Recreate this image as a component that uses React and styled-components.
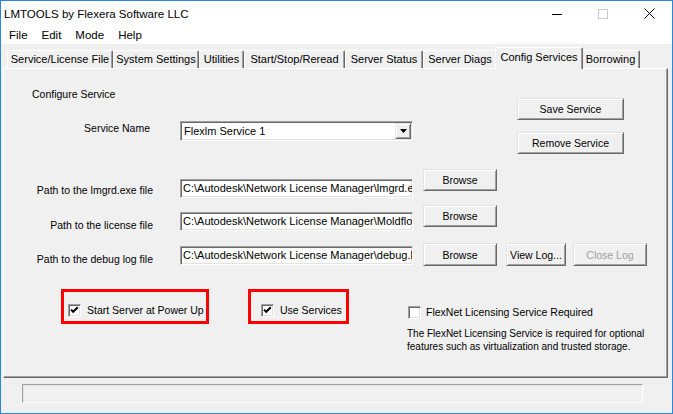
import React from 'react';
import styled, { createGlobalStyle } from 'styled-components';

const GlobalStyle = createGlobalStyle`
  html, body {
    margin: 0;
    padding: 0;
    background: #fff;
  }
  body {
    font-family: "Liberation Sans", Arial, sans-serif;
    color: #000;
  }
`;

const Window = styled.div`
  width: 673px;
  height: 414px;
  box-sizing: border-box;
  border: 1px solid #2b88d8;
  display: flex;
  flex-direction: column;
  background: #f0f0f0;
  overflow: hidden;
`;

const TitleBar = styled.div`
  height: 25px;
  display: flex;
  align-items: center;
  background: #fff;
  padding-left: 3px;
  font-size: 11.5px;
`;

const TitleText = styled.div`
  flex: 1;
`;

const Controls = styled.div`
  display: flex;
  height: 100%;
`;

const ControlButton = styled.div`
  width: 46px;
  display: flex;
  align-items: center;
  justify-content: center;
`;

const MenuBar = styled.div`
  height: 18px;
  display: flex;
  align-items: center;
  background: #fff;
  padding-left: 1px;
  font-size: 11.5px;
`;

const MenuItem = styled.div`
  padding: 0 7px;
`;

const Body = styled.div`
  flex: 1;
  display: flex;
  flex-direction: column;
  padding: 3px 4px 0 2px;
`;

const TabStrip = styled.div`
  display: flex;
  align-items: flex-end;
  height: 21px;
  padding-left: 4px;
  position: relative;
  z-index: 1;
`;

const Tab = styled.div`
  width: ${p => p.$w}px;
  height: ${p => (p.$active ? 22 : 18)}px;
  margin: ${p => (p.$active ? '0 -2px -1px' : '0')};
  box-sizing: border-box;
  border-top: 1px solid #fff;
  border-left: 1px solid #fff;
  border-right: 1px solid #696969;
  border-radius: 2px 2px 0 0;
  box-shadow: inset -1px 0 #a0a0a0;
  background: #f0f0f0;
  font-size: 11px;
  display: flex;
  justify-content: center;
  padding-top: ${p => (p.$active ? 3 : 2)}px;
  white-space: nowrap;
  position: relative;
  z-index: ${p => (p.$active ? 2 : 1)};
`;

const Panel = styled.div`
  height: 310px;
  box-sizing: border-box;
  border: 1px solid;
  border-color: #fff #696969 #696969 #fff;
  box-shadow: inset -1px -1px #a0a0a0;
  font-size: 10.5px;
  display: flex;
  flex-direction: column;
`;

const TopSection = styled.div`
  display: flex;
  margin-top: 19px;
`;

const LeftCol = styled.div`
  display: flex;
  flex-direction: column;
`;

const Heading = styled.div`
  padding-left: 28px;
  line-height: 13px;
`;

const ServiceRow = styled.div`
  display: flex;
  align-items: flex-start;
  margin-top: 20px;
`;

const FieldLabel = styled.div`
  width: ${p => p.$w}px;
  text-align: right;
  line-height: 13px;
  margin-top: ${p => p.$offset || 0}px;
  white-space: nowrap;
`;

const ButtonCol = styled.div`
  margin-left: auto;
  margin-right: 43px;
  margin-top: 10px;
  display: flex;
  flex-direction: column;
  gap: 12px;
`;

const Button = styled.div`
  width: ${p => p.$w}px;
  height: ${p => p.$h || 22}px;
  margin-left: ${p => p.$ml || 0}px;
  box-sizing: border-box;
  border: 1px solid;
  border-color: #e3e3e3 #696969 #696969 #e3e3e3;
  box-shadow: inset 1px 1px #fff, inset -1px -1px #a0a0a0;
  background: #f0f0f0;
  display: flex;
  align-items: center;
  justify-content: center;
  font-size: 10.5px;
  color: ${p => (p.$disabled ? '#a0a0a0' : '#000')};
  white-space: nowrap;
`;

const Sunken = styled.div`
  box-sizing: border-box;
  border: 1px solid;
  border-color: #a0a0a0 #fff #fff #a0a0a0;
  box-shadow: inset 1px 1px #696969, inset -1px -1px #e3e3e3;
  background: #fff;
`;

const Combo = styled(Sunken)`
  width: 233px;
  height: 20px;
  margin-left: 30px;
  display: flex;
  padding: 1px;
`;

const ComboText = styled.div`
  flex: 1;
  font-size: 11px;
  padding-left: 2px;
  line-height: 17px;
`;

const DropButton = styled.div`
  width: 16px;
  height: 16px;
  box-sizing: border-box;
  border: 1px solid;
  border-color: #e3e3e3 #696969 #696969 #e3e3e3;
  box-shadow: inset 1px 1px #fff, inset -1px -1px #a0a0a0;
  background: #f0f0f0;
  display: flex;
  align-items: center;
  justify-content: center;
`;

const PathRows = styled.div`
  margin-top: 15px;
  display: flex;
  flex-direction: column;
`;

const PathRow = styled.div`
  display: flex;
  align-items: flex-start;
  height: ${p => p.$h}px;
`;

const TextField = styled(Sunken)`
  width: 233px;
  height: 19px;
  margin-left: 27px;
  margin-top: ${p => p.$offset || 0}px;
  margin-right: 10px;
  overflow: hidden;
  white-space: nowrap;
  font-size: 11px;
  line-height: 17px;
  padding-left: 2px;
`;

const BottomSection = styled.div`
  display: flex;
  align-items: flex-start;
  margin-top: 23px;
`;

const Highlight = styled.div`
  width: ${p => p.$w}px;
  height: 35px;
  margin-left: ${p => p.$ml}px;
  box-sizing: border-box;
  border: 3px solid #f00;
  padding: 12px 0 0 ${p => p.$pl}px;
`;

const CheckRow = styled.div`
  display: flex;
  align-items: center;
  gap: ${p => p.$gap || 6}px;
  line-height: 13px;
  white-space: nowrap;
`;

const Box = styled(Sunken)`
  width: 13px;
  height: 13px;
  flex: none;
  display: flex;
  align-items: center;
  justify-content: center;
`;

const FlexNetCol = styled.div`
  margin-left: 59px;
  margin-top: 17px;
  display: flex;
  flex-direction: column;
`;

const Description = styled.div`
  margin-top: 8px;
  margin-left: -1px;
  font-size: 10px;
  line-height: 13px;
  white-space: nowrap;
`;

const StatusField = styled.div`
  margin: 6px 0 0 19px;
  width: 621px;
  height: 19px;
  box-sizing: border-box;
  border: 1px solid;
  border-color: #a0a0a0 #fff #fff #a0a0a0;
  box-shadow: inset 1px 1px #e3e3e3;
`;

const CheckBox = ({ checked }) => (
  <Box>
    {checked && (
      <svg width="9" height="9" viewBox="0 0 9 9">
        <path d="M1 3.6 L3.2 5.8 L7.8 1.2" fill="none" stroke="#000" strokeWidth="2" />
      </svg>
    )}
  </Box>
);

const tabs = [
  { label: 'Service/License File', w: 106 },
  { label: 'System Settings', w: 86 },
  { label: 'Utilities', w: 45 },
  { label: 'Start/Stop/Reread', w: 101 },
  { label: 'Server Status', w: 78 },
  { label: 'Server Diags', w: 74 },
  { label: 'Config Services', w: 88, active: true },
  { label: 'Borrowing', w: 59 }
];

export default function App() {
  return (
    <>
      <GlobalStyle />
      <Window>
        <TitleBar>
          <TitleText>LMTOOLS by Flexera Software LLC</TitleText>
          <Controls>
            <ControlButton>
              <svg width="10" height="10" viewBox="0 0 10 10">
                <rect x="0" y="5" width="10" height="1" fill="#000" />
              </svg>
            </ControlButton>
            <ControlButton>
              <svg width="10" height="10" viewBox="0 0 10 10">
                <rect x="0.5" y="0.5" width="9" height="9" fill="none" stroke="#cccccc" />
              </svg>
            </ControlButton>
            <ControlButton>
              <svg width="11" height="11" viewBox="0 0 11 11">
                <path d="M0.5 0.5 L10.5 10.5 M10.5 0.5 L0.5 10.5" stroke="#000" strokeWidth="1" />
              </svg>
            </ControlButton>
          </Controls>
        </TitleBar>
        <MenuBar>
          <MenuItem>File</MenuItem>
          <MenuItem>Edit</MenuItem>
          <MenuItem>Mode</MenuItem>
          <MenuItem>Help</MenuItem>
        </MenuBar>
        <Body>
          <TabStrip>
            {tabs.map(t => (
              <Tab key={t.label} $w={t.w} $active={t.active}>
                {t.label}
              </Tab>
            ))}
          </TabStrip>
          <Panel>
            <TopSection>
              <LeftCol>
                <Heading>Configure Service</Heading>
                <ServiceRow>
                  <FieldLabel $w={146} $offset={1}>Service Name</FieldLabel>
                  <Combo>
                    <ComboText>Flexlm Service 1</ComboText>
                    <DropButton>
                      <svg width="7" height="4" viewBox="0 0 7 4">
                        <polygon points="0,0 7,0 3.5,4" fill="#000" />
                      </svg>
                    </DropButton>
                  </Combo>
                </ServiceRow>
              </LeftCol>
              <ButtonCol>
                <Button $w={107}>Save Service</Button>
                <Button $w={107}>Remove Service</Button>
              </ButtonCol>
            </TopSection>

            <PathRows>
              <PathRow $h={36}>
                <FieldLabel $w={149} $offset={15}>Path to the lmgrd.exe file</FieldLabel>
                <TextField $offset={10}>C:\Autodesk\Network License Manager\lmgrd.exe</TextField>
                <Button $w={74}>Browse</Button>
              </PathRow>
              <PathRow $h={38}>
                <FieldLabel $w={149} $offset={14}>Path to the license file</FieldLabel>
                <TextField $offset={7}>C:\Autodesk\Network License Manager\Moldflow.lic</TextField>
                <Button $w={74}>Browse</Button>
              </PathRow>
              <PathRow $h={23}>
                <FieldLabel $w={149} $offset={10}>Path to the debug log file</FieldLabel>
                <TextField $offset={3}>C:\Autodesk\Network License Manager\debug.log</TextField>
                <Button $w={74} $h={23}>Browse</Button>
                <Button $w={60} $h={23} $ml={9}>View Log...</Button>
                <Button $w={74} $h={23} $ml={7} $disabled>Close Log</Button>
              </PathRow>
            </PathRows>

            <BottomSection>
              <Highlight $w={148} $ml={57} $pl={4}>
                <CheckRow>
                  <CheckBox checked />
                  <span>Start Server at Power Up</span>
                </CheckRow>
              </Highlight>
              <Highlight $w={101} $ml={39} $pl={10}>
                <CheckRow>
                  <CheckBox checked />
                  <span>Use Services</span>
                </CheckRow>
              </Highlight>
              <FlexNetCol>
                <CheckRow $gap={5}>
                  <CheckBox />
                  <span>FlexNet Licensing Service Required</span>
                </CheckRow>
                <Description>
                  The FlexNet Licensing Service is required for optional
                  <br />
                  features such as virtualization and trusted storage.
                </Description>
              </FlexNetCol>
            </BottomSection>
          </Panel>
          <StatusField />
        </Body>
      </Window>
    </>
  );
}
